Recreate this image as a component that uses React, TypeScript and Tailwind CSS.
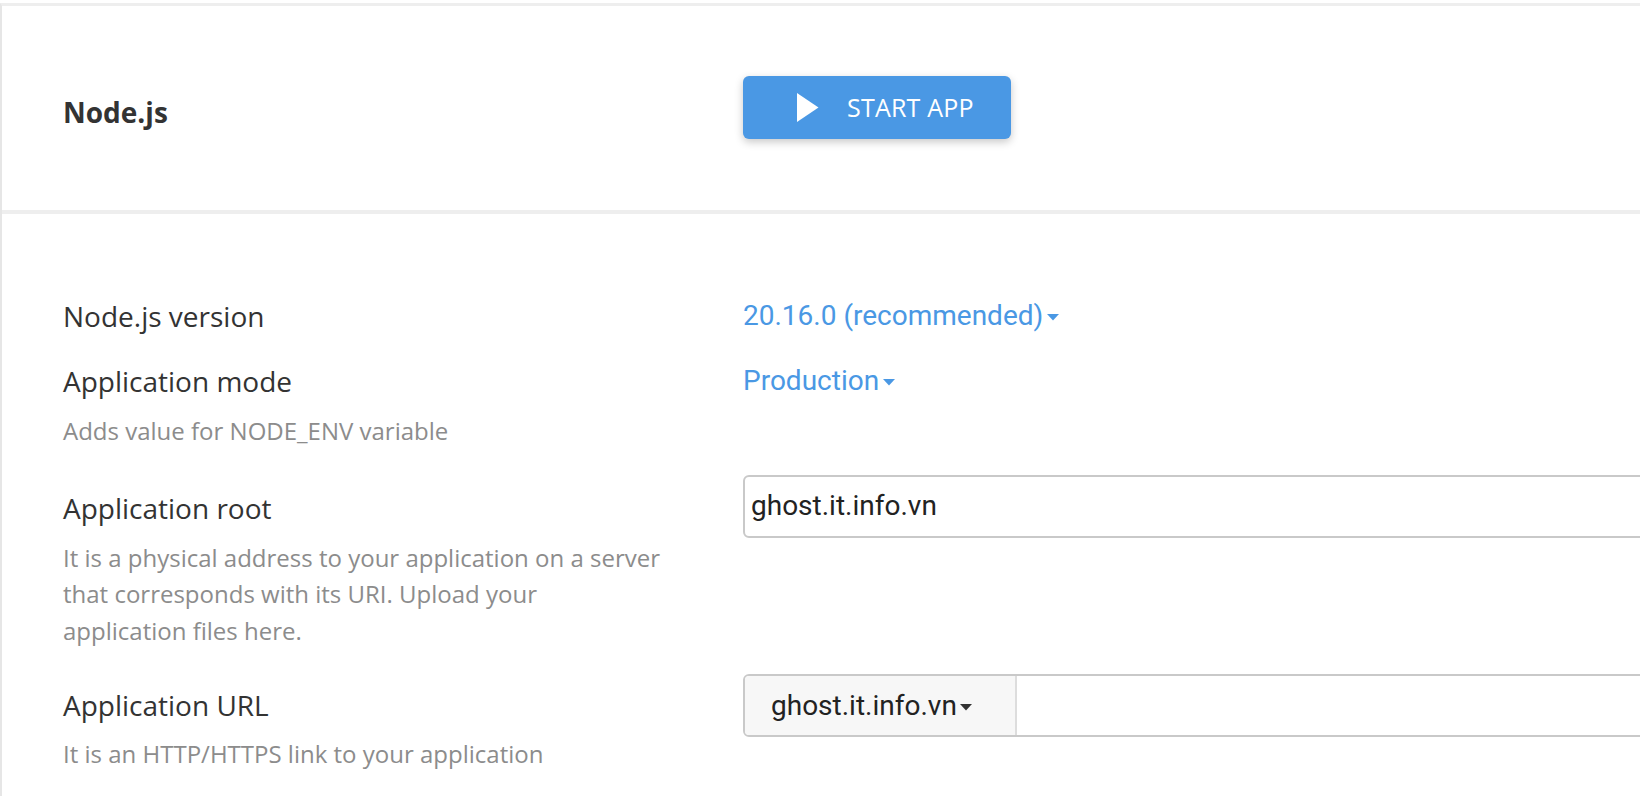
import React from 'react';

const sans = "font-['Open_Sans',_'Noto_Sans',_sans-serif]";
const roboto = "font-['Roboto',_'Liberation_Sans',_sans-serif]";

function Caret({ className }: { className: string }) {
  return (
    <svg width="14" height="8" viewBox="0 0 14 8" className={className}>
      <path d="M1 1h12L7 7.5z" fill="currentColor" />
    </svg>
  );
}

function Dropdown({ value }: { value: string }) {
  return (
    <div className={`${roboto} flex items-center text-[28px] leading-[40px] text-[#4a98e4]`}>
      <span>{value}</span>
      <Caret className="ml-[3px] mt-[2px]" />
    </div>
  );
}

function Label({ children }: { children: React.ReactNode }) {
  return <div className="text-[28px] leading-[40px] text-[#333333]">{children}</div>;
}

function Hint({ children }: { children: React.ReactNode }) {
  return <div className="text-[24px] leading-[36.5px] text-[#8c8c8c]">{children}</div>;
}

export default function App() {
  return (
    <div className={`${sans} h-[796px] w-[1640px] overflow-hidden bg-white`}>
      <div className="mt-[3px] h-full border-l-2 border-t-[3px] border-l-[#e6e6e6] border-t-[#eeeeee]">
        {/* header */}
        <div className="flex h-[208px] items-start border-b-4 border-[#eeeeee] pl-[61px]">
          <div className="mt-[86px] w-[680px] shrink-0 text-[28px] font-bold leading-[40px] text-[#333333]">Node.js</div>
          <button className="mt-[70px] flex h-[63px] w-[268px] shrink-0 items-center rounded-[6px] bg-[#4a98e4] pl-[54px] text-white shadow-[0_3px_8px_rgba(0,0,0,0.22)]">
            <svg width="22" height="29" viewBox="0 0 22 29">
              <path d="M0 0L21.5 14.5L0 29z" fill="white" />
            </svg>
            <span className="ml-[28px] text-[25px] leading-none tracking-[0.2px]">START APP</span>
          </button>
        </div>

        {/* body */}
        <div className="flex flex-col gap-[25px] pl-[61px] pt-[82px]">
          <div className="flex items-start">
            <div className="w-[680px] shrink-0">
              <Label>Node.js version</Label>
            </div>
            <Dropdown value="20.16.0 (recommended)" />
          </div>

          <div className="flex items-start">
            <div className="w-[680px] shrink-0">
              <Label>Application mode</Label>
              <div className="mt-[12px]">
                <Hint>Adds value for NODE_ENV variable</Hint>
              </div>
            </div>
            <Dropdown value="Production" />
          </div>

          <div className="flex items-start">
            <div className="w-[680px] shrink-0 pt-[13px]">
              <Label>Application root</Label>
              <div className="mt-[12px]">
                <Hint>
                  It is a physical address to your application on a server
                  <br />
                  that corresponds with its URI. Upload your
                  <br />
                  application files here.
                </Hint>
              </div>
            </div>
            <div
              className={`${roboto} flex h-[63px] w-[1000px] shrink-0 items-center rounded-[6px] border-2 border-[#c9c9c9] pl-[6px] text-[28px] text-[#222222]`}
            >
              ghost.it.info.vn
            </div>
          </div>

          <div className="flex items-start">
            <div className="w-[680px] shrink-0 pt-[11px]">
              <Label>Application URL</Label>
              <div className="mt-[11px]">
                <Hint>It is an HTTP/HTTPS link to your application</Hint>
              </div>
            </div>
            <div className="flex h-[63px] w-[1000px] shrink-0 rounded-[6px] border-2 border-[#c9c9c9]">
              <div
                className={`${roboto} flex w-[272px] items-center rounded-l-[4px] border-r-2 border-[#dddddd] bg-[#f7f7f7] pl-[26px] text-[28px] text-[#222222]`}
              >
                <span>ghost.it.info.vn</span>
                <Caret className="ml-[2px] mt-[2px] text-[#333333]" />
              </div>
              <div className="flex-1 bg-white" />
            </div>
          </div>
        </div>
      </div>
    </div>
  );
}
